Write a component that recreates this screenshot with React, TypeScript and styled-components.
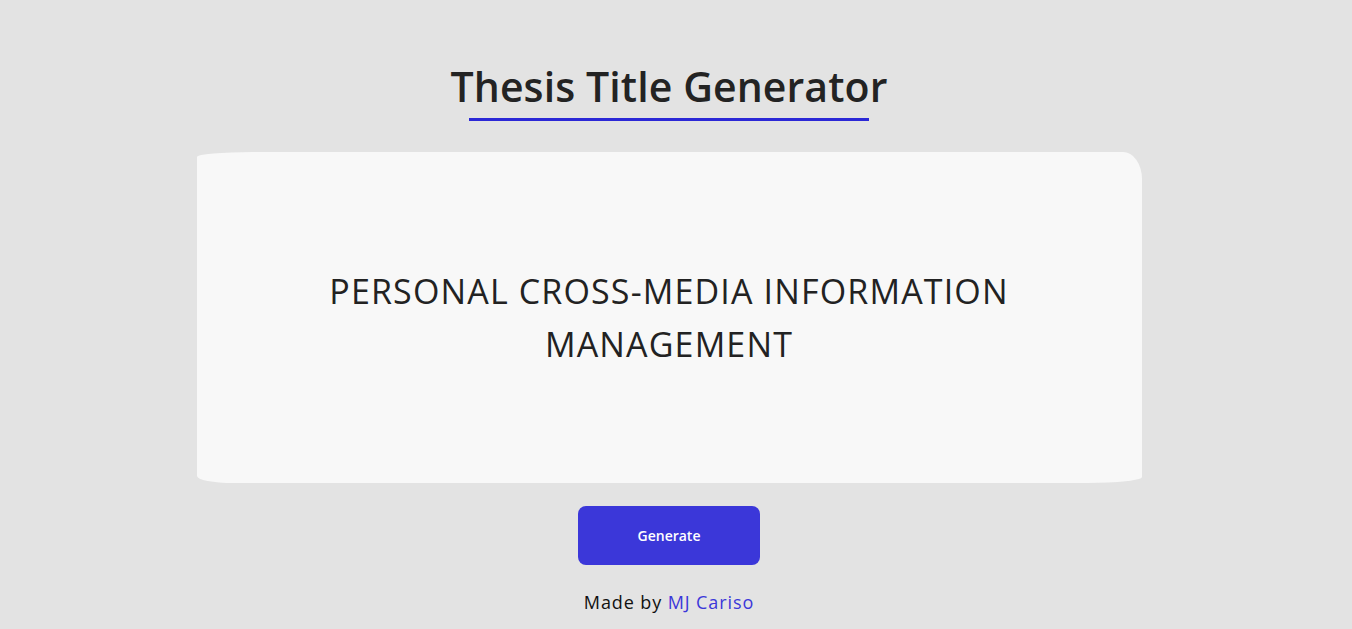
import React from "react";
import styled, { createGlobalStyle } from "styled-components";

const Global = createGlobalStyle`
  html, body { margin: 0; padding: 0; background: #e3e3e3; }
  body { font-family: "Open Sans", "Noto Sans", sans-serif; }
`;

const Page = styled.main`
  width: 1338px;
  display: flex;
  flex-direction: column;
  align-items: center;
  padding-top: 58px;
  box-sizing: border-box;
`;

const Title = styled.h1`
  margin: 0;
  font-family: "Open Sans", sans-serif;
  font-weight: 600;
  font-size: 41px;
  line-height: 56px;
  color: #232323;
  letter-spacing: 0.1px;
`;

const Underline = styled.div`
  width: 400px;
  height: 3px;
  background: #2b28d6;
  margin-top: 4px;
`;

const Card = styled.section`
  margin-top: 31px;
  width: 945px;
  height: 331px;
  background: #f8f8f8;
  border-radius: 56px 19px 55px 36px / 5px 27px 6px 7px;
  display: flex;
  align-items: center;
  justify-content: center;
  box-sizing: border-box;
  padding: 0 100px;
`;

const Result = styled.p`
  margin: 0;
  text-align: center;
  font-family: "Open Sans", sans-serif;
  font-weight: 400;
  font-size: 34px;
  line-height: 53px;
  letter-spacing: 1.15px;
  color: #222;
  text-transform: uppercase;
`;

const Button = styled.button`
  margin-top: 23px;
  width: 182px;
  height: 59px;
  border: none;
  border-radius: 8px;
  background: #3b37d9;
  color: #fff;
  font-family: "Open Sans", sans-serif;
  font-weight: 600;
  font-size: 14px;
  cursor: pointer;
`;

const Footer = styled.p`
  margin: 25px 0 0;
  font-family: "Open Sans", sans-serif;
  font-size: 18px;
  line-height: 24px;
  letter-spacing: 0.9px;
  color: #111;
`;

const Author = styled.a`
  color: #3b37d9;
  text-decoration: none;
`;

export default function App() {
  return (
    <>
      <Global />
      <Page>
        <Title>Thesis Title Generator</Title>
        <Underline />
        <Card>
          <Result>Personal Cross-Media Information Management</Result>
        </Card>
        <Button>Generate</Button>
        <Footer>
          Made by <Author href="#">MJ Cariso</Author>
        </Footer>
      </Page>
    </>
  );
}
